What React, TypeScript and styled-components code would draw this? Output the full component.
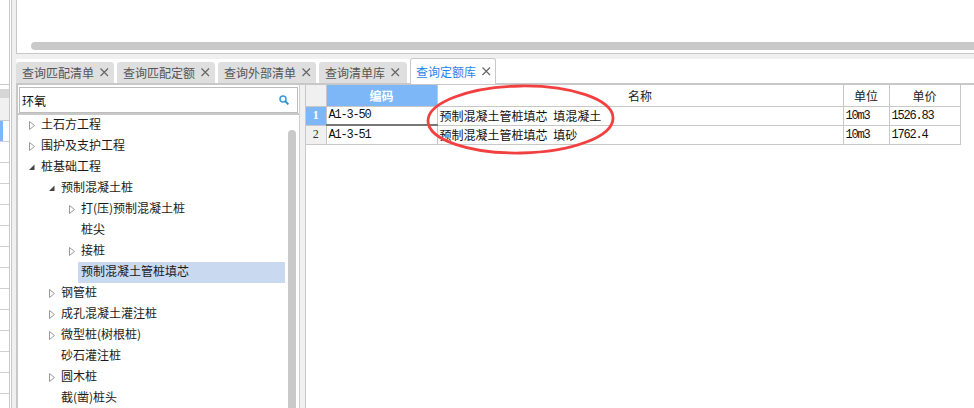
import React from 'react';
import styled, { createGlobalStyle } from 'styled-components';

const Global = createGlobalStyle`
  html, body { margin: 0; padding: 0; background: #fff; }
  body { width: 974px; height: 408px; overflow: hidden; font-family: "Noto Sans CJK SC", "Liberation Sans", sans-serif; }
  * { box-sizing: border-box; }
`;

const Page = styled.div`
  position: relative;
  width: 974px;
  height: 408px;
  display: flex;
  overflow: hidden;
  background: #fff;
`;

const SideStrip = styled.div`
  width: 9px;
  height: 408px;
  flex: none;
  display: flex;
  flex-direction: column;
`;
const StripTop = styled.div`
  height: 85px;
  border-bottom: 1px solid #c8c8c8;
  flex: none;
`;
const StripGap = styled.div`
  height: 4px;
  flex: none;
`;
const StripBand = styled.div`
  height: 9px;
  background: #d6d6d6;
  flex: none;
`;
const StripHead = styled.div`
  height: 23px;
  background: #f0f0f0;
  flex: none;
  border-bottom: 1px solid #c8c8c8;
`;
const StripRow = styled.div<{ $active?: boolean }>`
  height: 21px;
  flex: none;
  border-bottom: 1px solid #d0d0d0;
  background: ${p => (p.$active ? 'linear-gradient(90deg, #7eb7f7 3px, #fff 3px)' : '#fff')};
`;

const SplitterLeft = styled.div`
  width: 7px;
  flex: none;
  border-left: 1px solid #c8c8c8;
  background: linear-gradient(90deg, #fff 1px, #c8c8c8 1px, #c8c8c8 2px, #f0f0f0 2px);
`;

const Main = styled.div`
  flex: 1;
  min-width: 0;
  display: flex;
  flex-direction: column;
`;

const TopPane = styled.div`
  height: 54px;
  flex: none;
  border-left: 1px solid #c8c8c8;
  border-bottom: 1px solid #c8c8c8;
  padding: 42px 0 0 14px;
  background: #fff;
`;
const HScroll = styled.div`
  height: 8px;
  background: #c9c9c9;
  border-radius: 4px 0 0 4px;
`;
const Band = styled.div`
  height: 5px;
  flex: none;
  background: #f0f0f0;
`;

const TabStrip = styled.div`
  height: 26px;
  flex: none;
  display: flex;
  align-items: flex-end;
  gap: 3px;
  border-bottom: 2px solid #c8c8c8;
`;
const Tab = styled.div<{ $active?: boolean; $w: number }>`
  width: ${p => p.$w}px;
  height: ${p => (p.$active ? 26 : 21)}px;
  margin-bottom: ${p => (p.$active ? -1 : 0)}px;
  display: flex;
  align-items: center;
  padding-left: ${p => (p.$active ? 5 : 6)}px;
  gap: 6px;
  font-size: 12px;
  color: ${p => (p.$active ? '#1f86ee' : '#555')};
  background: ${p => (p.$active ? '#fff' : '#dfdfdf')};
  border: ${p => (p.$active ? '1px solid #c8c8c8' : 'none')};
  border-bottom: none;
  border-radius: 3px 3px 0 0;
  white-space: nowrap;
`;
const TabClose = styled.svg`
  width: 9px;
  height: 9px;
  flex: none;
`;

const Body = styled.div`
  flex: 1;
  min-height: 0;
  display: flex;
`;

const TreePane = styled.div`
  width: 284px;
  flex: none;
  display: flex;
  flex-direction: column;
  overflow: hidden;
  border-left: 2px solid #c8c8c8;
  border-right: 1px solid #d0d0d0;
`;
const SearchBox = styled.div`
  height: 26px;
  flex: none;
  margin: 2px 0 0 1px;
  width: 279px;
  border: 1px solid #bdbdbd;
  box-shadow: inset 0 0 0 1px #fff;
  display: flex;
  align-items: center;
  justify-content: space-between;
  padding: 0 8px 0 2px;
  font-size: 12px;
  color: #111;
`;
const SearchRule = styled.div`
  height: 2px;
  flex: none;
  margin-bottom: -2px;
  background: #c8c8c8;
`;
const TreeArea = styled.div`
  position: relative;
  flex: 1;
  overflow: hidden;
`;
const TreeRow = styled.div<{ $level: number }>`
  height: 21px;
  display: flex;
  align-items: center;
  margin-left: ${p => p.$level * 20 + 10}px;
  width: ${p => 267 - p.$level * 20 - 10}px;
  font-size: 12px;
  color: #1a1a1a;
  white-space: nowrap;
`;
const Arrow = styled.span`
  width: 10px;
  height: 10px;
  flex: none;
  margin: 2px 3px 0 0;
  display: flex;
`;
const RowLabel = styled.span<{ $selected?: boolean }>`
  flex: 1;
  height: 21px;
  line-height: 21px;
  padding-left: 3px;
  margin-left: -3px;
  background: ${p => (p.$selected ? 'linear-gradient(transparent 2px, #c8d9f0 2px)' : 'transparent')};
  box-shadow: ${p => (p.$selected ? '0 2px 0 #c8d9f0' : 'none')};
`;
const VScroll = styled.div`
  position: absolute;
  top: 17px;
  right: 3px;
  bottom: 0;
  width: 8px;
  background: #c9c9c9;
  border-radius: 4px 4px 0 0;
`;

const SplitterMid = styled.div`
  width: 6px;
  flex: none;
  background: #f0f0f0;
  border-right: 1px solid #c8c8c8;
`;

const TablePane = styled.div`
  flex: 1;
  min-width: 0;
  overflow: hidden;
`;
const GridTable = styled.table`
  border-collapse: collapse;
  table-layout: fixed;
  width: 654px;
  font-size: 12px;
`;
const HeadCell = styled.th<{ $active?: boolean; $w: number }>`
  width: ${p => p.$w}px;
  height: 21px;
  padding: 0;
  border: 1px solid #c8c8c8;
  border-top: none;
  border-left: none;
  font-weight: ${p => (p.$active ? 700 : 400)};
  font-size: 12px;
  color: ${p => (p.$active ? '#fff' : '#222')};
  background: ${p => (p.$active ? '#7eb7f7' : '#fff')};
`;
const Corner = styled(HeadCell)`
  background: #f0f0f0;
`;
const IndexCell = styled.td<{ $active?: boolean }>`
  height: 19px;
  padding: 0;
  text-align: center;
  font-family: "Liberation Serif", serif;
  font-size: 12px;
  font-weight: ${p => (p.$active ? 700 : 400)};
  color: ${p => (p.$active ? '#fff' : '#333')};
  background: ${p => (p.$active ? '#7eb7f7' : '#f0f0f0')};
  border-right: 1px solid #c8c8c8;
  border-bottom: 1px solid #c8c8c8;
`;
const Cell = styled.td<{ $mono?: boolean; $current?: boolean }>`
  height: 19px;
  padding: 0 0 0 2px;
  font-family: ${p => (p.$mono ? '"Liberation Mono", monospace' : '"Noto Sans CJK SC", sans-serif')};
  font-size: 12px;
  letter-spacing: ${p => (p.$mono ? '-1.2px' : '0')};
  word-spacing: 3px;
  color: #111;
  white-space: nowrap;
  border-right: 1px solid #c8c8c8;
  border-bottom: ${p => (p.$current ? '2px solid #777' : '1px solid #c8c8c8')};
`;

const Annotation = styled.svg`
  position: absolute;
  left: 420px;
  top: 78px;
  pointer-events: none;
`;

const tabs = [
  { t: '查询匹配清单', w: 98 },
  { t: '查询匹配定额', w: 98 },
  { t: '查询外部清单', w: 98 },
  { t: '查询清单库', w: 88 },
  { t: '查询定额库', w: 86, active: true },
];

const tree: { t: string; l: number; a?: 'open' | 'closed'; s?: boolean }[] = [
  { t: '土石方工程', l: 0, a: 'closed' },
  { t: '围护及支护工程', l: 0, a: 'closed' },
  { t: '桩基础工程', l: 0, a: 'open' },
  { t: '预制混凝土桩', l: 1, a: 'open' },
  { t: '打(压)预制混凝土桩', l: 2, a: 'closed' },
  { t: '桩尖', l: 2 },
  { t: '接桩', l: 2, a: 'closed' },
  { t: '预制混凝土管桩填芯', l: 2, s: true },
  { t: '钢管桩', l: 1, a: 'closed' },
  { t: '成孔混凝土灌注桩', l: 1, a: 'closed' },
  { t: '微型桩(树根桩)', l: 1, a: 'closed' },
  { t: '砂石灌注桩', l: 1 },
  { t: '圆木桩', l: 1, a: 'closed' },
  { t: '截(凿)桩头', l: 1 },
];

const Close = () => (
  <TabClose viewBox="0 0 9 9">
    <path d="M0.5 0.5L8 8M8 0.5L0.5 8" stroke="#666" strokeWidth="1.2" fill="none" />
  </TabClose>
);

const TreeArrow = ({ open }: { open: boolean }) => (
  <svg width="10" height="10" viewBox="0 0 10 10">
    {open ? (
      <path d="M1 8L6.5 8L6.5 2.5Z" fill="#444" />
    ) : (
      <path d="M1.5 1.5L6.5 5.5L1.5 9.5Z" fill="#fff" stroke="#999" strokeWidth="1" />
    )}
  </svg>
);

export default function App() {
  return (
    <Page>
      <Global />
      <SideStrip>
        <StripTop />
        <StripGap />
        <StripBand />
        <StripHead />
        <StripRow $active />
        {Array.from({ length: 13 }).map((_, i) => (
          <StripRow key={i} />
        ))}
      </SideStrip>
      <SplitterLeft />
      <Main>
        <TopPane>
          <HScroll />
        </TopPane>
        <Band />
        <TabStrip>
          {tabs.map(tab => (
            <Tab key={tab.t} $w={tab.w} $active={tab.active}>
              {tab.t}
              <Close />
            </Tab>
          ))}
        </TabStrip>
        <Body>
          <TreePane>
            <SearchBox>
              环氧
              <svg width="10" height="10" viewBox="0 0 10 10">
                <circle cx="4" cy="4" r="3" fill="none" stroke="#3d9bd6" strokeWidth="1.5" />
                <path d="M6.2 6.2L9.4 9.4" stroke="#2c86c4" strokeWidth="1.8" />
              </svg>
            </SearchBox>
            <SearchRule />
            <TreeArea>
              {tree.map(n => (
                <TreeRow key={n.t} $level={n.l}>
                  <Arrow>{n.a && <TreeArrow open={n.a === 'open'} />}</Arrow>
                  <RowLabel $selected={n.s}>{n.t}</RowLabel>
                </TreeRow>
              ))}
              <VScroll />
            </TreeArea>
          </TreePane>
          <SplitterMid />
          <TablePane>
            <GridTable>
              <thead>
                <tr>
                  <Corner $w={20} />
                  <HeadCell $w={111} $active>编码</HeadCell>
                  <HeadCell $w={406}>名称</HeadCell>
                  <HeadCell $w={46}>单位</HeadCell>
                  <HeadCell $w={71}>单价</HeadCell>
                </tr>
              </thead>
              <tbody>
                <tr>
                  <IndexCell $active>1</IndexCell>
                  <Cell $mono $current>A1-3-50</Cell>
                  <Cell>预制混凝土管桩填芯 填混凝土</Cell>
                  <Cell $mono>10m3</Cell>
                  <Cell $mono>1526.83</Cell>
                </tr>
                <tr>
                  <IndexCell>2</IndexCell>
                  <Cell $mono>A1-3-51</Cell>
                  <Cell>预制混凝土管桩填芯 填砂</Cell>
                  <Cell $mono>10m3</Cell>
                  <Cell $mono>1762.4</Cell>
                </tr>
              </tbody>
            </GridTable>
          </TablePane>
        </Body>
      </Main>
      <Annotation width="204" height="84" viewBox="0 0 204 84">
        <ellipse cx="100.5" cy="41.5" rx="92.5" ry="33.5" fill="none" stroke="#f24040" strokeWidth="2.8" transform="rotate(-1 100.5 41.5)" />
      </Annotation>
    </Page>
  );
}
